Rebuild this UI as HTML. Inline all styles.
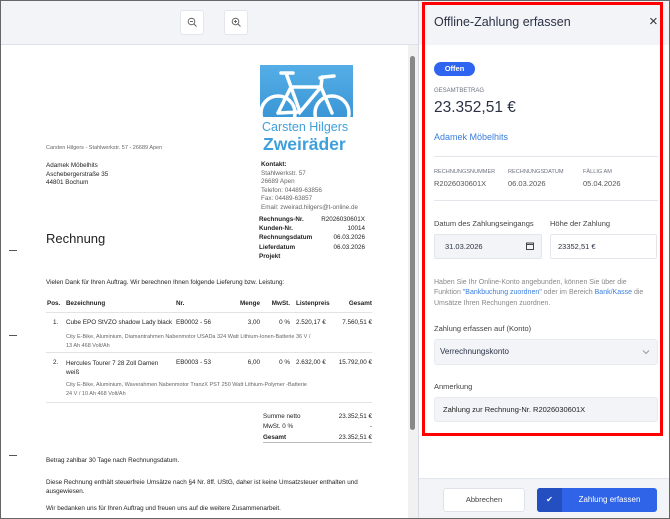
<!DOCTYPE html>
<html><head><meta charset="utf-8"><style>
*{box-sizing:border-box;margin:0;padding:0}
body{width:670px;height:519px;overflow:hidden;background:#fff;font-family:"Liberation Sans","DejaVu Sans",sans-serif;position:relative;color:#222}
.a{position:absolute;white-space:nowrap}
.d{font-size:6.3px;color:#222}
.g{color:#666}
.b{font-weight:bold}
.r{text-align:right}
.s{font-size:8px;color:#2a3244}
.lab{font-size:7px;color:#6b7280}
</style></head><body>
<div class="a" style="left:0;top:0;width:670px;height:519px;border:1px solid #666;z-index:50;pointer-events:none"></div>
<div class="a" style="left:0;top:0;width:418px;height:45px;background:#f3f4f8;border-bottom:1px solid #dde0ea"></div>
<div class="a" style="left:180px;top:10px;width:24px;height:25px;background:#fff;border:1px solid #e4e6ee;border-radius:3px"></div>
<div class="a" style="left:224px;top:10px;width:24px;height:25px;background:#fff;border:1px solid #e4e6ee;border-radius:3px"></div>
<svg class="a" style="left:187px;top:17px" width="11" height="11" viewBox="0 0 11 11"><circle cx="4.5" cy="4.5" r="3.3" fill="none" stroke="#666" stroke-width="1"/><path d="M3 4.5h3M7 7l2.5 2.5" stroke="#666" stroke-width="1"/></svg>
<svg class="a" style="left:231px;top:17px" width="11" height="11" viewBox="0 0 11 11"><circle cx="4.5" cy="4.5" r="3.3" fill="none" stroke="#666" stroke-width="1"/><path d="M3 4.5h3M4.5 3v3M7 7l2.5 2.5" stroke="#666" stroke-width="1"/></svg>
<div class="a" style="left:408px;top:45px;width:10px;height:474px;background:#f1f1f1"></div>
<div class="a" style="left:410px;top:56px;width:5px;height:374px;background:#888;border-radius:3px"></div>
<div class="a" style="left:260px;top:65px;width:93px;height:52px;background:linear-gradient(#55aee6,#3a96d6);overflow:hidden">
<svg width="93" height="52" viewBox="0 0 93 52"><g fill="none" stroke="#fff" stroke-width="3.5" stroke-linecap="round"><circle cx="18" cy="48" r="17"/><circle cx="72" cy="48" r="17"/><path d="M18 48L31 22H61L72 48M31 22L40 47L61 22M40 47L18 48M26 8L31 22M21 8h12M60 13L64 12L74 11M62 12L61 22"/></g></svg></div>
<div class="a" style="left:262px;top:120px;font-size:12.5px;color:#3f9fdc">Carsten Hilgers</div>
<div class="a" style="left:263px;top:134px;font-size:17.5px;font-weight:bold;color:#3f9fdc">Zweiräder</div>
<div class="a d g" style="left:46px;top:145px;font-size:5.5px">Carsten Hilgers - Stahlwerkstr. 57 - 26689 Apen</div>
<div class="a d" style="left:46px;top:162px;line-height:8.7px">Adamek Möbelhits<br>Aschebergerstraße 35<br>44801 Bochum</div>
<div class="a d b" style="left:261px;top:161px">Kontakt:</div>
<div class="a d g" style="left:261px;top:170px;line-height:8.4px">Stahlwerkstr. 57<br>26689 Apen<br>Telefon: 04489-63856<br>Fax: 04489-63857<br>Email: zweirad.hilgers@t-online.de</div>
<div class="a d b" style="left:259px;top:215px;line-height:9.2px">Rechnungs-Nr.<br>Kunden-Nr.<br>Rechnungsdatum<br>Lieferdatum<br>Projekt</div>
<div class="a d r" style="left:300px;top:215px;width:65px;line-height:9.2px">R2026030601X<br>10014<br>06.03.2026<br>06.03.2026</div>
<div class="a" style="left:46px;top:231px;font-size:13px;color:#222">Rechnung</div>
<div class="a" style="left:9px;top:250px;width:8px;height:1px;background:#555"></div>
<div class="a" style="left:9px;top:335px;width:8px;height:1px;background:#555"></div>
<div class="a" style="left:9px;top:455px;width:8px;height:1px;background:#555"></div>
<div class="a d" style="left:46px;top:279px">Vielen Dank für Ihren Auftrag. Wir berechnen Ihnen folgende Lieferung bzw. Leistung:</div>
<div class="a d b" style="left:47px;top:300px">Pos.</div>
<div class="a d b" style="left:66px;top:300px">Bezeichnung</div>
<div class="a d b" style="left:176px;top:300px">Nr.</div>
<div class="a d b r" style="left:220px;top:300px;width:40px">Menge</div>
<div class="a d b r" style="left:260px;top:300px;width:30px">MwSt.</div>
<div class="a d b" style="left:296px;top:300px">Listenpreis</div>
<div class="a d b r" style="left:330px;top:300px;width:42px">Gesamt</div>
<div class="a" style="left:46px;top:312px;width:326px;height:1px;background:#e3e3e3"></div>
<div class="a d" style="left:53px;top:319px">1.</div>
<div class="a d" style="left:66px;top:319px">Cube EPO StVZO shadow Lady black</div>
<div class="a d" style="left:176px;top:319px">EB0002 - 56</div>
<div class="a d r" style="left:220px;top:319px;width:40px">3,00</div>
<div class="a d r" style="left:260px;top:319px;width:30px">0 %</div>
<div class="a d" style="left:296px;top:319px">2.520,17 €</div>
<div class="a d r" style="left:320px;top:319px;width:52px">7.560,51 €</div>
<div class="a d g" style="left:66px;top:333px;font-size:5.5px;line-height:8.5px">City E-Bike, Aluminium, Diamantrahmen Nabenmotor USADa 324 Watt Lithium-Ionen-Batterie 36 V /<br>13 Ah 468 Volt/Ah</div>
<div class="a" style="left:46px;top:352px;width:326px;height:1px;background:#e3e3e3"></div>
<div class="a d" style="left:53px;top:359px">2.</div>
<div class="a d" style="left:66px;top:359px;line-height:9px">Hercules Tourer 7 28 Zoll Damen<br>weiß</div>
<div class="a d" style="left:176px;top:359px">EB0003 - 53</div>
<div class="a d r" style="left:220px;top:359px;width:40px">6,00</div>
<div class="a d r" style="left:260px;top:359px;width:30px">0 %</div>
<div class="a d" style="left:296px;top:359px">2.632,00 €</div>
<div class="a d r" style="left:320px;top:359px;width:52px">15.792,00 €</div>
<div class="a d g" style="left:66px;top:381px;font-size:5.5px;line-height:8.5px">City E-Bike, Aluminium, Waverahmen Nabenmotor TranzX PST 250 Watt Lithium-Polymer -Batterie<br>24 V / 10 Ah 468 Volt/Ah</div>
<div class="a" style="left:46px;top:402px;width:326px;height:1px;background:#e3e3e3"></div>
<div class="a d" style="left:263px;top:412px;line-height:10.3px">Summe netto<br>MwSt. 0 %<br><b>Gesamt</b></div>
<div class="a d r" style="left:310px;top:412px;width:62px;line-height:10.3px">23.352,51 €<br>-<br>23.352,51 €</div>
<div class="a" style="left:263px;top:442px;width:109px;height:1px;background:#bbb"></div>
<div class="a d" style="left:46px;top:457px">Betrag zahlbar 30 Tage nach Rechnungsdatum.</div>
<div class="a d" style="left:46px;top:478px;line-height:9px">Diese Rechnung enthält steuerfreie Umsätze nach §4 Nr. 8ff. UStG, daher ist keine Umsatzsteuer enthalten und<br>ausgewiesen.</div>
<div class="a d" style="left:46px;top:505px">Wir bedanken uns für Ihren Auftrag und freuen uns auf die weitere Zusammenarbeit.</div>
<div class="a" style="left:418px;top:0;width:252px;height:519px;background:#fff;border-left:1px solid #d6d9e2"></div>
<div class="a" style="left:419px;top:0;width:251px;height:45px;background:#f3f4f8"></div>
<div class="a" style="left:434px;top:15px;font-size:12.5px;color:#2a3244">Offline-Zahlung erfassen</div>
<div class="a" style="left:649px;top:13px;font-size:15px;color:#333">×</div>
<div class="a" style="left:434px;top:62px;width:41px;height:14px;background:#2f64f0;border-radius:7px;color:#fff;font-size:7.5px;font-weight:bold;text-align:center;line-height:14px">Offen</div>
<div class="a lab" style="left:434px;top:88px;font-size:6px">GESAMTBETRAG</div>
<div class="a" style="left:434px;top:99px;font-size:15.5px;color:#2a3244">23.352,51 €</div>
<div class="a" style="left:434px;top:132px;font-size:9px;color:#3b7ddd">Adamek Möbelhits</div>
<div class="a" style="left:434px;top:156px;width:224px;height:1px;background:#e4e6ec"></div>
<div class="a lab" style="left:434px;top:169px;font-size:5.6px">RECHNUNGSNUMMER</div>
<div class="a lab" style="left:508px;top:169px;font-size:5.6px">RECHNUNGSDATUM</div>
<div class="a lab" style="left:583px;top:169px;font-size:5.6px">FÄLLIG AM</div>
<div class="a lab" style="left:434px;top:179px;font-size:7.5px;color:#555">R2026030601X</div>
<div class="a lab" style="left:508px;top:179px;font-size:7.5px;color:#555">06.03.2026</div>
<div class="a lab" style="left:583px;top:179px;font-size:7.5px;color:#555">05.04.2026</div>
<div class="a" style="left:434px;top:200px;width:224px;height:1px;background:#e4e6ec"></div>
<div class="a s" style="left:434px;top:219px;font-size:7.5px;color:#444">Datum des Zahlungseingangs</div>
<div class="a s" style="left:550px;top:219px;font-size:7.5px;color:#444">Höhe der Zahlung</div>
<div class="a" style="left:434px;top:234px;width:108px;height:25px;background:#f3f4f8;border:1px solid #e4e6ee;border-radius:2px"></div>
<div class="a s" style="left:445px;top:242px;font-size:7.5px">31.03.2026</div>
<svg class="a" style="left:526px;top:242px" width="8" height="8" viewBox="0 0 8 8"><rect x=".5" y="1" width="7" height="6.5" fill="none" stroke="#444"/><path d="M.5 2.5h7" stroke="#444"/></svg>
<div class="a" style="left:550px;top:234px;width:107px;height:25px;background:#fff;border:1px solid #e4e6ee;border-radius:2px"></div>
<div class="a s" style="left:558px;top:242px;font-size:7.5px">23352,51 €</div>
<div class="a" style="left:434px;top:278px;font-size:7px;color:#888;line-height:10.3px">Haben Sie Ihr Online-Konto angebunden, können Sie über die<br>Funktion <span style="color:#3b7ddd">"Bankbuchung zuordnen"</span> oder im Bereich <span style="color:#3b7ddd">Bank/Kasse</span> die<br>Umsätze Ihren Rechungen zuordnen.</div>
<div class="a" style="left:434px;top:324px;font-size:7.5px;color:#444">Zahlung erfassen auf (Konto)</div>
<div class="a" style="left:434px;top:339px;width:224px;height:26px;background:#f3f4f8;border:1px solid #e8eaf0;border-radius:3px"></div>
<div class="a s" style="left:440px;top:347px;font-size:8px">Verrechnungskonto</div>
<svg class="a" style="left:642px;top:349px" width="8" height="6" viewBox="0 0 8 6"><path d="M1 1.5l3 3 3-3" fill="none" stroke="#999"/></svg>
<div class="a" style="left:434px;top:382px;font-size:7.5px;color:#444">Anmerkung</div>
<div class="a" style="left:434px;top:397px;width:224px;height:25px;background:#f3f4f8;border:1px solid #e8eaf0;border-radius:3px"></div>
<div class="a s" style="left:443px;top:405px;font-size:7.5px;color:#222">Zahlung zur Rechnung-Nr. R2026030601X</div>
<div class="a" style="left:422px;top:2px;width:241px;height:434px;border:3px solid #f00"></div>
<div class="a" style="left:419px;top:478px;width:251px;height:41px;background:#f3f4f8;border-top:1px solid #e4e6ee"></div>
<div class="a" style="left:443px;top:488px;width:82px;height:24px;background:#fff;border:1px solid #dfe2ea;border-radius:3px;font-size:7.5px;color:#444;text-align:center;line-height:22px">Abbrechen</div>
<div class="a" style="left:537px;top:488px;width:120px;height:24px;background:#2f64e8;border-radius:3px;overflow:hidden">
<div style="position:absolute;left:0;top:0;width:25px;height:24px;background:#244fc0;color:#fff;font-size:8px;text-align:center;line-height:24px">✔</div>
<div style="position:absolute;left:25px;top:0;width:95px;height:24px;color:#fff;font-size:8px;text-align:center;line-height:24px">Zahlung erfassen</div></div>
</body></html>
